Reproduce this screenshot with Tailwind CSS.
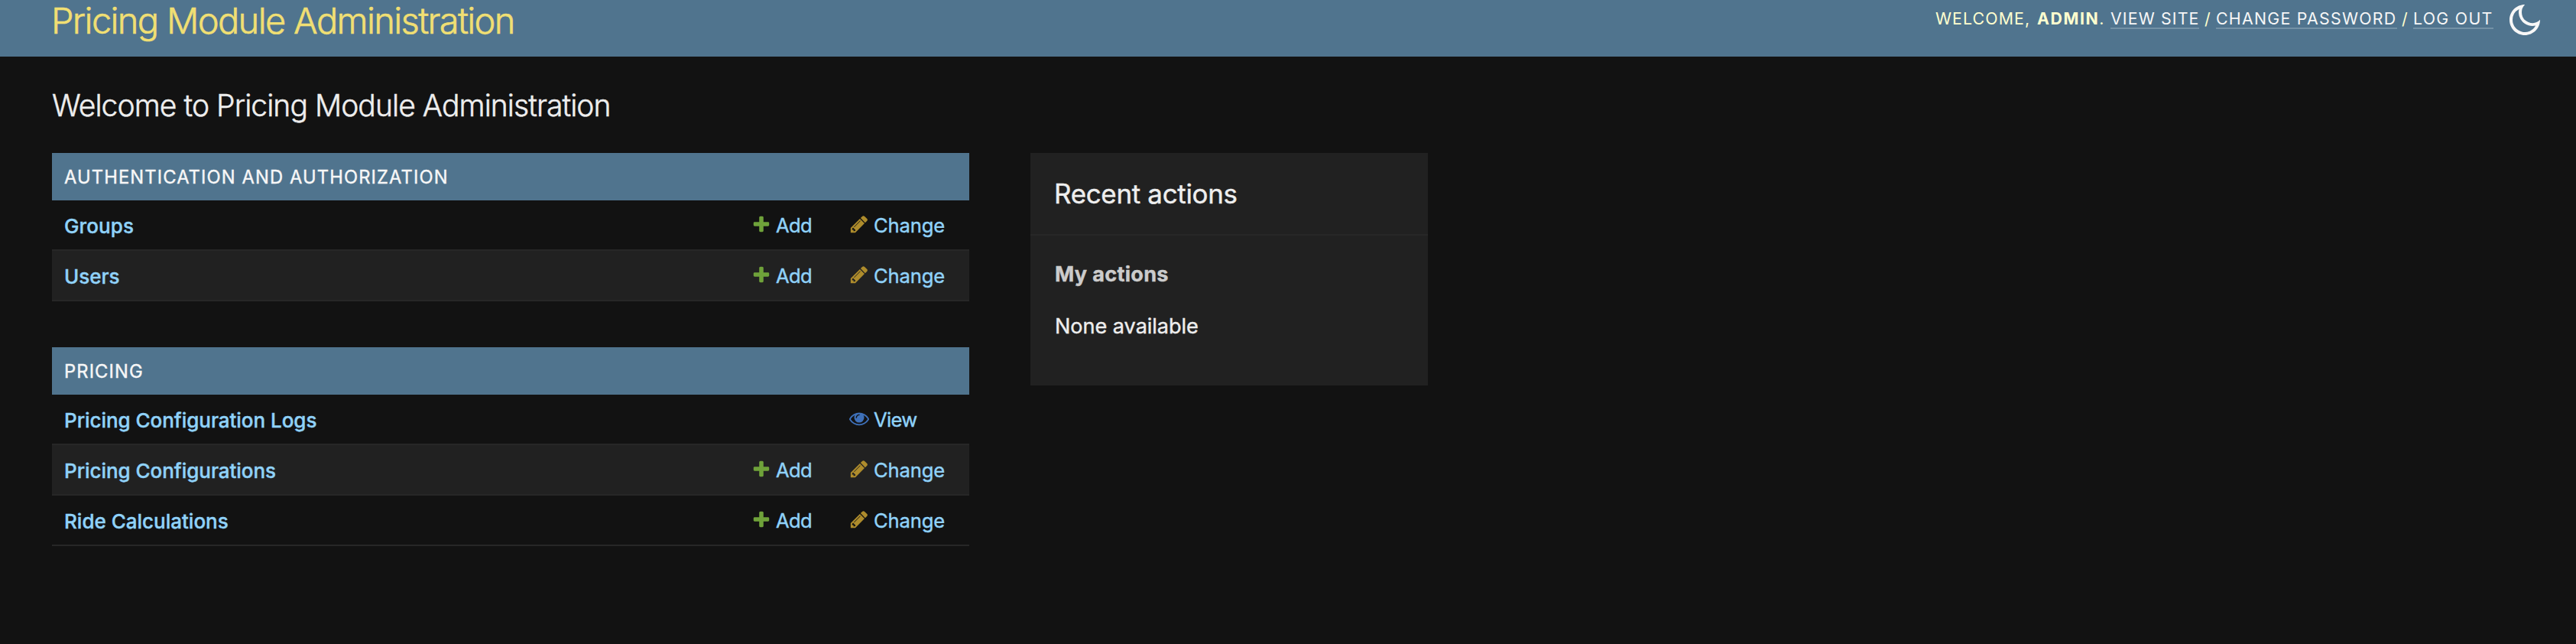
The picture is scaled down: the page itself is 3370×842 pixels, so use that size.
<!DOCTYPE html>
<html lang="en">
<head>
<meta charset="utf-8">
<title>Pricing Module Administration</title>
<script src="https://cdn.jsdelivr.net/npm/@tailwindcss/browser@4"></script>
</head>
<body class="bg-[#121212] text-[#eeeeee] font-['Inter',sans-serif] w-[3370px] h-[842px] overflow-hidden">
<svg class="hidden">
  <symbol id="add" viewBox="0 0 1792 1792"><path fill="#6fa23a" d="M1600 796v192q0 40-28 68t-68 28h-416v416q0 40-28 68t-68 28h-192q-40 0-68-28t-28-68v-416h-416q-40 0-68-28t-28-68v-192q0-40 28-68t68-28h416v-416q0-40 28-68t68-28h192q40 0 68 28t28 68v416h416q40 0 68 28t28 68z"/></symbol>
  <symbol id="change" viewBox="0 0 1792 1792"><path fill="#ae8c2c" d="M491 1536l91-91-235-235-91 91v107h128v128h107zm523-928q0-22-22-22-10 0-17 7l-542 542q-7 7-7 17 0 22 22 22 10 0 17-7l542-542q7-7 7-17zm-54-192l416 416-832 832h-416v-416zm683 96q0 53-37 90l-166 166-416-416 166-165q36-38 90-38 53 0 91 38l235 234q37 39 37 91z"/></symbol>
  <symbol id="view" viewBox="0 0 1792 1792"><path fill="#3e70b9" d="M1664 960q-152-236-381-353 61 104 61 225 0 185-131.5 316.5t-316.5 131.5-316.5-131.5-131.5-316.5q0-121 61-225-229 117-381 353 133 205 333.5 326.5t434.5 121.5 434.5-121.5 333.5-326.5zm-720-384q0-20-14-34t-34-14q-125 0-214.5 89.5t-89.5 214.5q0 20 14 34t34 14 34-14 14-34q0-86 61-147t147-61q20 0 34-14t14-34zm848 384q0 34-20 69-140 230-376.5 368.5t-499.5 138.5-499.5-139-376.5-368q-20-35-20-69t20-69q140-229 376.5-368t499.5-139 499.5 139 376.5 368q20 35 20 69z"/></symbol>
</svg>

<header class="flex items-start h-[74px] pl-[67px] bg-[#50748e] whitespace-nowrap">
  <h1 class="w-[2465px] text-[47px] leading-[54px] font-light tracking-[-1.65px] text-[#f0df73] [-webkit-text-stroke:0.6px]">Pricing Module Administration</h1>
  <div class="flex pt-3 text-[21.3px] leading-6 text-[#feffcf]">
    <span class="w-[133px] tracking-[1.13px]">WELCOME,</span>
    <span class="w-[96px]"><strong class="font-bold tracking-[1.6px]">ADMIN</strong>.</span>
    <a class="w-[116px] mr-[7px] border-b-2 border-[#7391a6] text-[#f7f7f7] tracking-[1.16px]">VIEW SITE</a>
    <span class="w-[15px]">/</span>
    <a class="w-[237px] mr-[6px] border-b-2 border-[#7391a6] text-[#f7f7f7] tracking-[1.28px]">CHANGE PASSWORD</a>
    <span class="w-[15px]">/</span>
    <a class="w-[105px] border-b-2 border-[#7391a6] text-[#f7f7f7] tracking-[1.3px]">LOG OUT</a>
  </div>
  <svg class="size-12 mt-[2px] ml-[17px]" viewBox="0 0 24 24" fill="#f7f7f7"><path d="M10 7a7 7 0 0 0 12 4.9v.1c0 5.523-4.477 10-10 10S2 17.523 2 12 6.477 2 12 2h.1A6.979 6.979 0 0 0 10 7zm-6 5a8 8 0 0 0 15.062 3.762A9 9 0 0 1 8.238 4.938 7.999 7.999 0 0 0 4 12z"/></svg>
</header>

<main class="pl-[68px] pt-10 whitespace-nowrap">
  <h2 class="text-[39px] leading-[48px] font-light tracking-[-0.93px] [-webkit-text-stroke:0.5px]">Welcome to Pricing Module Administration</h2>
  <div class="flex items-start gap-20 mt-[38px]">
    <div class="w-[1200px] text-[#90d2f9] text-[25.6px] [-webkit-text-stroke:0.4px]">
      <section class="mb-[60px]">
        <h3 class="flex items-center h-[62px] pl-4 pt-[2px] bg-[#50748e] text-[#f7f7f7] text-[23.7px] tracking-[1.13px]">AUTHENTICATION AND AUTHORIZATION</h3>
        <div class="flex items-center h-[66px] pl-4 pt-[3px] border-b-2 border-[#272727]">
          <a class="w-[899px] font-medium text-[26px] tracking-[0.1px]">Groups</a>
          <a class="flex items-center w-[128px] tracking-[-0.7px]"><svg class="size-[26px] mr-[6px] -mt-[5px]"><use href="#add"/></svg>Add</a>
          <a class="flex items-center tracking-[-0.14px]"><svg class="size-[26px] mr-[6px] -mt-[5px]"><use href="#change"/></svg>Change</a>
        </div>
        <div class="flex items-center h-[66px] pl-4 pt-[3px] border-b-2 border-[#272727] bg-[#212121]">
          <a class="w-[899px] font-medium text-[26px]">Users</a>
          <a class="flex items-center w-[128px] tracking-[-0.7px]"><svg class="size-[26px] mr-[6px] -mt-[5px]"><use href="#add"/></svg>Add</a>
          <a class="flex items-center tracking-[-0.14px]"><svg class="size-[26px] mr-[6px] -mt-[5px]"><use href="#change"/></svg>Change</a>
        </div>
      </section>
      <section>
        <h3 class="flex items-center h-[62px] pl-4 pt-[2px] bg-[#50748e] text-[#f7f7f7] text-[23.7px] tracking-[1.13px]">PRICING</h3>
        <div class="flex items-center h-[66px] pl-4 pt-[3px] border-b-2 border-[#272727]">
          <a class="w-[1027px] font-medium text-[26px] tracking-[-0.04px]">Pricing Configuration Logs</a>
          <a class="flex items-center tracking-[-0.7px]"><svg class="size-[26px] mr-[6px] -mt-[5px]"><use href="#view"/></svg>View</a>
        </div>
        <div class="flex items-center h-[66px] pl-4 pt-[3px] border-b-2 border-[#272727] bg-[#212121]">
          <a class="w-[899px] font-medium text-[26px] tracking-[-0.04px]">Pricing Configurations</a>
          <a class="flex items-center w-[128px] tracking-[-0.7px]"><svg class="size-[26px] mr-[6px] -mt-[5px]"><use href="#add"/></svg>Add</a>
          <a class="flex items-center tracking-[-0.14px]"><svg class="size-[26px] mr-[6px] -mt-[5px]"><use href="#change"/></svg>Change</a>
        </div>
        <div class="flex items-center h-[66px] pl-4 pt-[3px] border-b-2 border-[#272727]">
          <a class="w-[899px] font-medium text-[26px]">Ride Calculations</a>
          <a class="flex items-center w-[128px] tracking-[-0.7px]"><svg class="size-[26px] mr-[6px] -mt-[5px]"><use href="#add"/></svg>Add</a>
          <a class="flex items-center tracking-[-0.14px]"><svg class="size-[26px] mr-[6px] -mt-[5px]"><use href="#change"/></svg>Change</a>
        </div>
      </section>
    </div>
    <aside class="w-[520px] h-[304px] bg-[#212121] [-webkit-text-stroke:0.4px]">
      <h2 class="flex items-center h-[108px] pl-[31px] border-b-2 border-[#272727] text-[34.9px] tracking-[-0.29px]">Recent actions</h2>
      <div class="pl-8 pt-[33px] text-[27.1px] leading-9">
        <h3 class="font-bold text-[#cccccc] tracking-[0.3px]">My actions</h3>
        <p class="mt-8 tracking-[-0.05px]">None available</p>
      </div>
    </aside>
  </div>
</main>
</body>
</html>
